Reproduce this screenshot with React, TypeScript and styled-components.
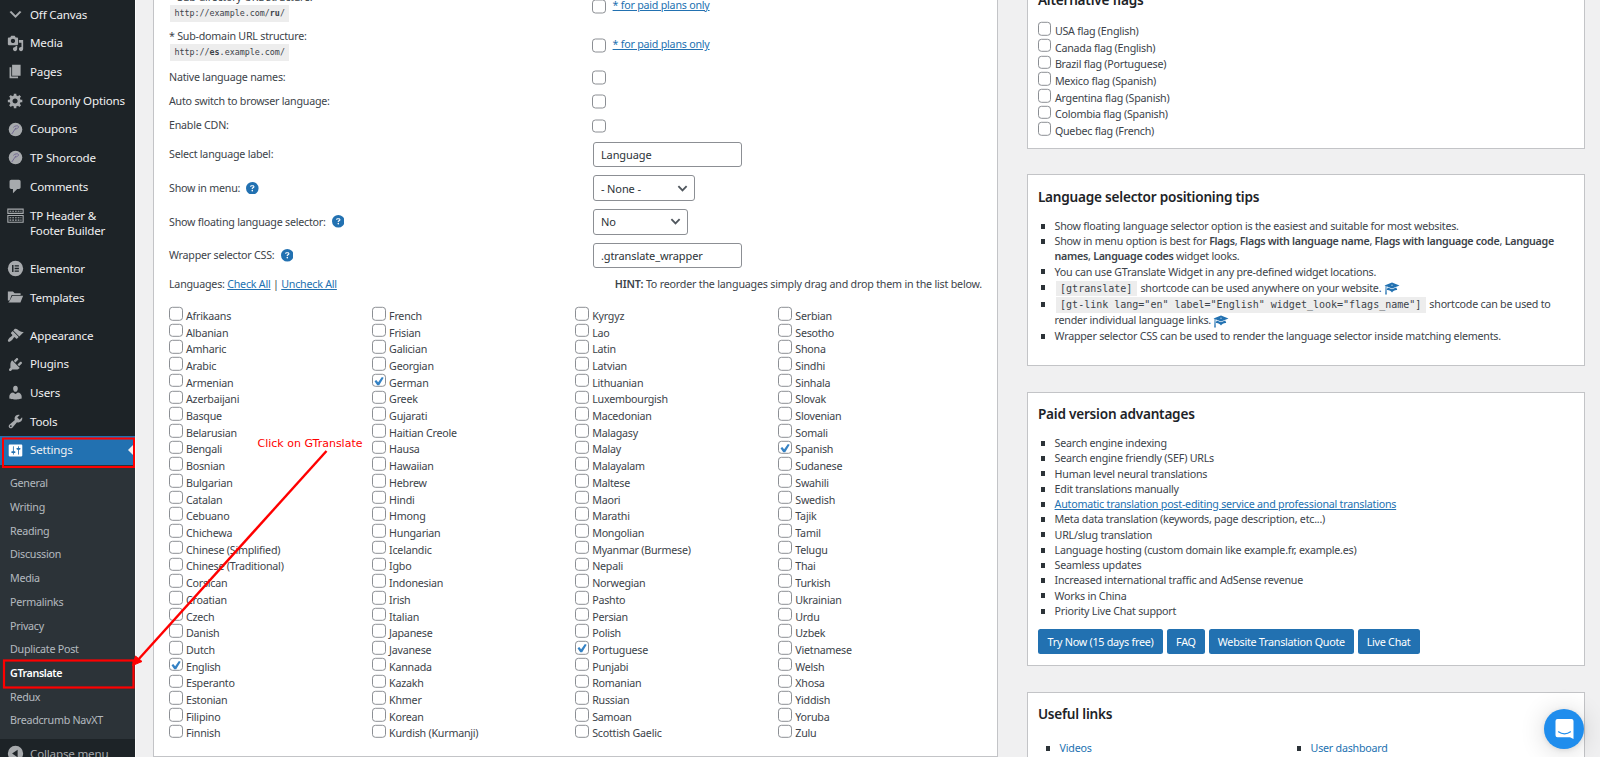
import React from "react";
import styled, { createGlobalStyle } from "styled-components";
import { FaCircleQuestion } from "react-icons/fa6";

const sans = `"Noto Sans", "Open Sans", sans-serif`;
const mono = `"DejaVu Sans Mono", "Liberation Mono", monospace`;

const Global = createGlobalStyle`
  * { box-sizing: border-box; }
  body { margin: 0; overflow: hidden; background: #f0f0f1; font-family: ${sans}; font-size: 10.7px; letter-spacing: -0.23px; color: #3c434a; }
`;

const Page = styled.div`
  position: relative;
  display: flex;
  width: 1600px;
  height: 757px;
  overflow: hidden;
`;

/* ---------- sidebar ---------- */
const Sidebar = styled.nav`
  width: 134.5px;
  flex: none;
  padding-top: 0.5px;
  background: #1d2327;
  box-shadow: 1px 0 #fafafa;
`;
const MenuItem = styled.div<{ $active?: boolean; $tall?: boolean; $gap?: boolean; $muted?: boolean }>`
  position: relative;
  display: flex;
  height: ${(p) => (p.$tall ? 44 : 28.7)}px;
  margin-top: ${(p) => (p.$gap ? 9.4 : 0)}px;
  padding: 6.2px 0 0 6.5px;
  background: ${(p) => (p.$active ? "#2271b1" : "transparent")};
  color: ${(p) => (p.$muted ? "#a7aaad" : "#f0f0f1")};
  font-size: 11.6px;
  letter-spacing: -0.18px;
  line-height: 15.2px;
  svg { flex: none; width: 17px; height: 17px; margin-top: -0.8px; margin-right: 6.5px; fill: ${(p) => (p.$active ? "#fff" : "#a7aaad")}; }
`;
const ActiveNotch = styled.i`
  position: absolute;
  right: 0;
  top: 7px;
  border: 7px solid transparent;
  border-right-color: #f0f0f1;
  border-left: 0;
`;
const Submenu = styled.div`
  background: #2c3338;
  padding: 7.2px 0 6.2px;
`;
const SubItem = styled.div<{ $current?: boolean }>`
  height: 23.74px;
  line-height: 23.74px;
  padding-left: 10px;
  font-size: 10.7px;
  letter-spacing: ${(p) => (p.$current ? "-0.38px" : "-0.25px")};
  color: ${(p) => (p.$current ? "#fff" : "rgba(240, 246, 252, 0.7)")};
  font-weight: ${(p) => (p.$current ? 600 : 400)};
`;

/* ---------- shared parts ---------- */
const Check = styled.span<{ $raise?: boolean }>`
  display: block;
  flex: none;
  width: 13.6px;
  height: 13.6px;
  border: 1px solid #8c8f94;
  border-radius: 3.4px;
  background: #fff;
  transform: translateY(${(p) => (p.$raise ? -2.2 : 0.5)}px);
  svg { display: block; width: 12px; height: 12px; fill: #3582c4; }
`;
const Link = styled.a`
  color: #2271b1;
  text-decoration: underline;
`;
const Code = styled.code<{ $small?: boolean }>`
  font-family: ${mono};
  font-size: ${(p) => (p.$small ? 8.35 : 10)}px;
  line-height: 12px;
  letter-spacing: 0;
  background: rgba(0, 0, 0, 0.07);
  padding: ${(p) => (p.$small ? "3px 4.4px 4px" : "2px 4.5px 2.5px")};
  margin: 0 1px;
`;

/* ---------- settings form ---------- */
const SettingsPanel = styled.section`
  width: 845px;
  height: 771px;
  flex: none;
  margin: -14px 0 0 18.5px;
  padding: 0 15px;
  background: #fff;
  border: 1px solid #c3c4c7;
  border-top: 0;
`;
const Row = styled.div<{ $h: number }>`
  display: flex;
  align-items: center;
  height: ${(p) => p.$h}px;
`;
const Label = styled.div`
  display: flex;
  align-items: center;
  width: 423px;
  line-height: 16px;
  svg { width: 12.6px; height: 12.6px; margin-left: 6px; color: #2271b1; }
`;
const StackLabel = styled.div`
  width: 423px;
  line-height: 15.2px;
  margin-top: -1.6px;
`;
const PlanLink = styled(Link)`
  margin: -2px 0 0 7px;
`;
const Field = styled.div<{ $w: number }>`
  display: flex;
  justify-content: space-between;
  align-items: center;
  width: ${(p) => p.$w}px;
  height: 25.5px;
  margin-left: 0.9px;
  padding: 0 6px 0 7px;
  border: 1px solid #8c8f94;
  border-radius: 3px;
  color: #2c3338;
  font-size: 11px;
  letter-spacing: -0.1px;
  svg { width: 11px; height: 11px; fill: none; stroke: #50575e; stroke-width: 2; }
`;
const LanguagesBar = styled.div`
  display: flex;
  justify-content: space-between;
  align-items: center;
  height: 24px;
  margin-bottom: 1px;
  b { font-weight: 600; }
  span + span { letter-spacing: -0.2px; }
`;
const LanguageGrid = styled.div`
  display: grid;
  grid-template-columns: repeat(4, 203.1px);
  grid-template-rows: repeat(26, 16.71px);
  grid-auto-flow: column;
  margin-top: 11.2px;
`;
const CheckLine = styled.label`
  display: flex;
  align-items: center;
  gap: 3.4px;
  height: 16.71px;
  line-height: 16px;
  white-space: nowrap;
`;

/* ---------- right column ---------- */
const Aside = styled.aside`
  display: flex;
  flex-direction: column;
  gap: 25.5px;
  width: 557.7px;
  margin: -20.5px 0 0 28.9px;
`;
const Card = styled.section<{ $h: number }>`
  height: ${(p) => p.$h}px;
  flex: none;
  padding: 0 10px;
  background: #fff;
  border: 1px solid #c3c4c7;
`;
const CardTitle = styled.h2<{ $top: number; $bottom: number }>`
  margin: ${(p) => p.$top}px 0 ${(p) => p.$bottom}px;
  font-size: 13.6px;
  line-height: 18px;
  font-weight: 600;
  letter-spacing: -0.22px;
  color: #1d2327;
`;
const Bullets = styled.ul`
  list-style: none;
  margin: 0;
  padding: 0;
`;
const Bullet = styled.li<{ $h?: number }>`
  position: relative;
  list-style: none;
  min-height: ${(p) => p.$h ?? 15.27}px;
  line-height: ${(p) => p.$h ?? 15.27}px;
  padding-left: 16.7px;
  white-space: nowrap;
  b { font-weight: 600; letter-spacing: -0.3px; }
  svg { width: 16px; height: 15px; margin: -3px 0; fill: #2271b1; vertical-align: -1.2px; }
  &::before {
    content: "";
    position: absolute;
    left: 3.5px;
    top: ${(p) => (p.$h ?? 15.27) / 2 - 2.8}px;
    width: 4px;
    height: 5px;
    background: #2c3338;
  }
`;
const Buttons = styled.div`
  display: flex;
  gap: 3.6px;
  margin-top: 9.9px;
`;
const Button = styled.button<{ $w: number }>`
  width: ${(p) => p.$w}px;
  height: 25.3px;
  padding: 0;
  border: 0;
  border-radius: 2.5px;
  background: #2271b1;
  color: #fff;
  font: 10.8px ${sans};
  letter-spacing: -0.28px;
  white-space: nowrap;
`;
const LinkColumns = styled.div`
  display: grid;
  grid-template-columns: 251px 1fr;
  padding-left: 5px;
  a { text-decoration: none; }
`;

/* ---------- overlays ---------- */
const ChatLauncher = styled.div`
  position: absolute;
  left: 1544px;
  top: 708.7px;
  width: 40px;
  height: 40px;
  border-radius: 50%;
  background: #1f8ded;
  box-shadow: 0 1px 5px rgba(0, 0, 0, 0.1), 0 2px 26px rgba(0, 0, 0, 0.16);
  svg { display: block; width: 40px; height: 40px; }
`;
const Annotation = styled.svg`
  position: absolute;
  left: 0;
  top: 0;
  pointer-events: none;
`;
const Note = styled.div`
  position: absolute;
  left: 257.5px;
  top: 437px;
  font: 11px/14px "DejaVu Sans", sans-serif;
  letter-spacing: 0;
  color: #f00;
  white-space: nowrap;
`;

const paths: Record<string, string> = {
  arrow: "M5 6l5 5 5-5 2 1-7 7-7-7z",
  media: "M13 11V4c0-.55-.45-1-1-1h-1.67L9 1H5L3.67 3H2c-.55 0-1 .45-1 1v7c0 .55.45 1 1 1h10c.55 0 1-.45 1-1zM7 4.5c1.38 0 2.5 1.12 2.5 2.5S8.38 9.5 7 9.5 4.5 8.38 4.5 7 5.62 4.5 7 4.5zM14 6h5v10.5c0 1.38-1.12 2.5-2.5 2.5S14 17.88 14 16.5s1.12-2.5 2.5-2.5c.17 0 .34.02.5.05V9h-3V6zm-4 8.05V13h2v3.5c0 1.38-1.12 2.5-2.5 2.5S7 17.88 7 16.5 8.12 14 9.5 14c.17 0 .34.02.5.05z",
  page: "M6 15V2h10v13H6zm-1 1h8v2H3V5h2v11z",
  gear: "M18 12h-2.18c-.17.7-.44 1.35-.81 1.93l1.54 1.54-2.1 2.1-1.54-1.54c-.58.36-1.23.63-1.91.79V19H8v-2.18c-.68-.16-1.33-.43-1.91-.79l-1.54 1.54-2.12-2.12 1.54-1.54c-.36-.58-.63-1.23-.79-1.91H1V9.03h2.17c.16-.7.44-1.35.8-1.94L2.43 5.55l2.1-2.1 1.54 1.54c.58-.37 1.24-.64 1.93-.81V2h3v2.18c.68.16 1.33.43 1.91.79l1.54-1.54 2.12 2.12-1.54 1.54c.36.59.64 1.24.8 1.94H18V12zm-8.5 1.5c1.66 0 3-1.34 3-3s-1.34-3-3-3-3 1.34-3 3 1.34 3 3 3z",
  comment: "M5 2h9c1.1 0 2 .9 2 2v7c0 1.1-.9 2-2 2h-2l-5 5v-5H5c-1.1 0-2-.9-2-2V4c0-1.1.9-2 2-2z",
  brush: "M14.48 11.06L7.41 3.99l1.5-1.5c.5-.56 2.3-.47 3.51.32 1.21.8 1.43 1.28 2.91 2.1 1.18.64 2.45 1.26 4.45.85zm-.71.71L6.7 4.7 4.93 6.47c-.39.39-.39 1.02 0 1.41l1.06 1.06c.39.39.39 1.03 0 1.42-.6.6-1.43 1.11-2.21 1.69-.35.26-.7.53-1.01.84C1.43 14.23.4 16.08 1.4 17.07c.99 1 2.84-.03 4.18-1.36.31-.31.58-.66.85-1.02.57-.78 1.08-1.61 1.69-2.21.39-.39 1.02-.39 1.41 0l1.06 1.06c.39.39 1.02.39 1.41 0z",
  plug: "M13.11 4.36L9.87 7.6 8 5.73l3.24-3.24c.35-.34 1.05-.2 1.56.32.52.51.66 1.21.31 1.55zm-8 1.77l.91-1.12 9.01 9.01-1.19.84c-.71.71-2.63 1.16-3.82 1.16H6.14L4.9 17.26c-.59.59-1.54.59-2.12 0-.59-.58-.59-1.53 0-2.12l1.24-1.24v-3.88c0-1.13.4-3.19 1.09-3.89zm7.26 3.97l3.24-3.24c.34-.35 1.04-.21 1.55.31.52.51.66 1.21.31 1.55l-3.24 3.25z",
  user: "M10 9.25c-2.27 0-2.73-3.44-2.73-3.44C7 4.02 7.82 2 9.97 2c2.16 0 2.98 2.02 2.71 3.81 0 0-.41 3.44-2.68 3.44zm0 2.57L12.72 10c2.39 0 4.52 2.33 4.52 4.53v2.49s-3.65 1.13-7.24 1.13c-3.65 0-7.24-1.13-7.24-1.13v-2.49c0-2.25 1.94-4.48 4.47-4.48z",
  wrench: "M16.68 9.77c-1.34 1.34-3.3 1.67-4.95.99l-5.41 6.52c-.99.99-2.59.99-3.58 0s-.99-2.59 0-3.57l6.52-5.42c-.68-1.65-.35-3.61.99-4.95 1.28-1.28 3.12-1.62 4.72-1.06l-2.89 2.89 2.82 2.82 2.86-2.87c.53 1.58.18 3.39-1.08 4.65zM3.81 16.21c.4.39 1.04.39 1.43 0 .4-.4.4-1.04 0-1.43-.39-.4-1.03-.4-1.43 0-.39.39-.39 1.03 0 1.43z",
  sliders: "M18 16V4c0-.55-.45-1-1-1H3c-.55 0-1 .45-1 1v12c0 .55.45 1 1 1h14c.55 0 1-.45 1-1zM8 11h1c.55 0 1 .45 1 1s-.45 1-1 1H8v1.5c0 .28-.22.5-.5.5s-.5-.22-.5-.5V13H6c-.55 0-1-.45-1-1s.45-1 1-1h1V5.5c0-.28.22-.5.5-.5s.5.22.5.5V11zm5-2h-1c-.55 0-1-.45-1-1s.45-1 1-1h1V5.500c0-.28.22-.5.5-.5s.5.22.5.5V7h1c.55 0 1 .45 1 1s-.45 1-1 1h-1v5.500c0 .28-.22.5-.5.5s-.5-.22-.5-.5V9z",
  learn: "M10 10L2.54 7.02 3 18H1l.48-11.41L0 6l10-4 10 4zm0-5c-.55 0-1 .22-1 .5s.45.5 1 .5 1-.22 1-.5-.45-.5-1-.5zm0 6l5.57-2.23c.71.94 1.2 2.07 1.36 3.3-.3-.04-.61-.07-.93-.07-2.55 0-4.78 1.37-6 3.41C8.78 13.37 6.55 12 4 12c-.32 0-.63.03-.93.07.16-1.23.65-2.36 1.36-3.3z",
  folder: "M1 3h6l2 2h7v2H5.5L3 13.5H1zM6.3 8H19l-3.2 8H1.5l1.2-1.3z",
  collapse: "M10 1a9 9 0 1 0 0 18a9 9 0 0 0 0-18zM12.5 5.5v9L6 10z",
};

const Icon = ({ name }: { name: string }) => {
  if (name === "coupon")
    return (
      <svg viewBox="0 0 20 20">
        <circle cx="10" cy="10" r="8" />
        <path d="M5.500 15.500L10.500 8M7.500 7.500c1.500-2 5.500-2.500 6-1s-2 3-4 3" fill="none" stroke="#6f6591" strokeWidth="1.1" />
      </svg>
    );
  if (name === "builder")
    return (
      <svg viewBox="0 0 20 20">
        <g fill="none" stroke="#a7aaad" strokeWidth="1.3">
          <path d="M1 2.500h18v5h-18zM1 10h18v8h-18z" />
          <path d="M3 5h14M3 12.700h14M3 15.500h14" strokeDasharray="2 1.200" />
        </g>
      </svg>
    );
  if (name === "elementor")
    return (
      <svg viewBox="0 0 20 20">
        <circle cx="10" cy="10" r="9" />
        <path d="M6.800 6v8M9 6.900h5M9 10h5M9 13.100h5" stroke="#1d2327" strokeWidth="1.700" />
      </svg>
    );
  return (
    <svg viewBox="0 0 20 20">
      <path d={paths[name]} fillRule={name === "collapse" ? "evenodd" : undefined} />
    </svg>
  );
};

const Checkbox = ({ on, raise }: { on?: boolean; raise?: boolean }) => (
  <Check $raise={raise}>
    {on && (
      <svg viewBox="0 0 20 20">
        <path d="M14.830 3.500l3 1.600-7.500 12.200h-3.200L2.500 10.700l2.900-2.200 3.200 4z" />
      </svg>
    )}
  </Check>
);

const Caret = () => (
  <svg viewBox="0 0 12 12">
    <path d="M1.500 3.500L6 8l4.500-4.500" />
  </svg>
);

const menu: { icon: string; text: string; second?: string; gap?: boolean }[] = [
  { icon: "arrow", text: "Off Canvas" },
  { icon: "media", text: "Media" },
  { icon: "page", text: "Pages" },
  { icon: "gear", text: "Couponly Options" },
  { icon: "coupon", text: "Coupons" },
  { icon: "coupon", text: "TP Shorcode" },
  { icon: "comment", text: "Comments" },
  { icon: "builder", text: "TP Header &", second: "Footer Builder" },
  { icon: "elementor", text: "Elementor", gap: true },
  { icon: "folder", text: "Templates" },
  { icon: "brush", text: "Appearance", gap: true },
  { icon: "plug", text: "Plugins" },
  { icon: "user", text: "Users" },
  { icon: "wrench", text: "Tools" },
];
const submenu = ["General", "Writing", "Reading", "Discussion", "Media", "Permalinks", "Privacy", "Duplicate Post", "GTranslate", "Redux", "Breadcrumb NavXT"];

const languages = (
  "Afrikaans,Albanian,Amharic,Arabic,Armenian,Azerbaijani,Basque,Belarusian,Bengali,Bosnian,Bulgarian,Catalan,Cebuano,Chichewa,Chinese (Simplified),Chinese (Traditional),Corsican,Croatian,Czech,Danish,Dutch,English,Esperanto,Estonian,Filipino,Finnish," +
  "French,Frisian,Galician,Georgian,German,Greek,Gujarati,Haitian Creole,Hausa,Hawaiian,Hebrew,Hindi,Hmong,Hungarian,Icelandic,Igbo,Indonesian,Irish,Italian,Japanese,Javanese,Kannada,Kazakh,Khmer,Korean,Kurdish (Kurmanji)," +
  "Kyrgyz,Lao,Latin,Latvian,Lithuanian,Luxembourgish,Macedonian,Malagasy,Malay,Malayalam,Maltese,Maori,Marathi,Mongolian,Myanmar (Burmese),Nepali,Norwegian,Pashto,Persian,Polish,Portuguese,Punjabi,Romanian,Russian,Samoan,Scottish Gaelic," +
  "Serbian,Sesotho,Shona,Sindhi,Sinhala,Slovak,Slovenian,Somali,Spanish,Sudanese,Swahili,Swedish,Tajik,Tamil,Telugu,Thai,Turkish,Ukrainian,Urdu,Uzbek,Vietnamese,Welsh,Xhosa,Yiddish,Yoruba,Zulu"
).split(",");
const enabled = new Set(["English", "German", "Portuguese", "Spanish"]);

const flags = ["USA flag (English)", "Canada flag (English)", "Brazil flag (Portuguese)", "Mexico flag (Spanish)", "Argentina flag (Spanish)", "Colombia flag (Spanish)", "Quebec flag (French)"];
const advantages = [
  "Search engine indexing",
  "Search engine friendly (SEF) URLs",
  "Human level neural translations",
  "Edit translations manually",
  "Automatic translation post-editing service and professional translations",
  "Meta data translation (keywords, page description, etc...)",
  "URL/slug translation",
  "Language hosting (custom domain like example.fr, example.es)",
  "Seamless updates",
  "Increased international traffic and AdSense revenue",
  "Works in China",
  "Priority Live Chat support",
];

export default function App() {
  return (
    <Page>
      <Global />
      <Sidebar>
        {menu.map((m) => (
          <MenuItem key={m.text} $tall={!!m.second} $gap={m.gap}>
            <Icon name={m.icon} />
            <span>
              {m.text}
              {m.second && <br />}
              {m.second}
            </span>
          </MenuItem>
        ))}
        <MenuItem $active>
          <Icon name="sliders" />
          <span>Settings</span>
          <ActiveNotch />
        </MenuItem>
        <Submenu>
          {submenu.map((s) => (
            <SubItem key={s} $current={s === "GTranslate"}>{s}</SubItem>
          ))}
        </Submenu>
        <MenuItem $muted>
          <Icon name="collapse" />
          <span>Collapse menu</span>
        </MenuItem>
      </Sidebar>

      <SettingsPanel>
        <Row $h={39.5}>
          <StackLabel>
            * Sub-directory URL structure:
            <br />
            <Code $small>http://example.com/<b>ru</b>/</Code>
          </StackLabel>
          <Checkbox />
          <PlanLink>* for paid plans only</PlanLink>
        </Row>
        <Row $h={39.5}>
          <StackLabel>
            * Sub-domain URL structure:
            <br />
            <Code $small>http://<b>es</b>.example.com/</Code>
          </StackLabel>
          <Checkbox />
          <PlanLink>* for paid plans only</PlanLink>
        </Row>
        {["Native language names:", "Auto switch to browser language:", "Enable CDN:"].map((t) => (
          <Row key={t} $h={24.2}>
            <Label>{t}</Label>
            <Checkbox />
          </Row>
        ))}
        <Row $h={33.7}>
          <Label>Select language label:</Label>
          <Field $w={149}>Language</Field>
        </Row>
        <Row $h={33.7}>
          <Label>Show in menu:<FaCircleQuestion /></Label>
          <Field $w={102}>- None -<Caret /></Field>
        </Row>
        <Row $h={33.7}>
          <Label>Show floating language selector:<FaCircleQuestion /></Label>
          <Field $w={95.5}>No<Caret /></Field>
        </Row>
        <Row $h={33.7}>
          <Label>Wrapper selector CSS:<FaCircleQuestion /></Label>
          <Field $w={149}>.gtranslate_wrapper</Field>
        </Row>
        <LanguagesBar>
          <span>Languages: <Link>Check All</Link> | <Link>Uncheck All</Link></span>
          <span><b>HINT:</b> To reorder the languages simply drag and drop them in the list below.</span>
        </LanguagesBar>
        <LanguageGrid>
          {languages.map((l) => (
            <CheckLine key={l}>
              <Checkbox raise on={enabled.has(l)} />
              {l}
            </CheckLine>
          ))}
        </LanguageGrid>
      </SettingsPanel>

      <Aside>
        <Card $h={169}>
          <CardTitle $top={10.5} $bottom={13.6}>Alternative flags</CardTitle>
          {flags.map((f) => (
            <CheckLine key={f}>
              <Checkbox raise />
              {f}
            </CheckLine>
          ))}
        </Card>
        <Card $h={192}>
          <CardTitle $top={13} $bottom={12.8}>Language selector positioning tips</CardTitle>
          <Bullets>
            <Bullet>Show floating language selector option is the easiest and suitable for most websites.</Bullet>
            <Bullet>
              Show in menu option is best for <b>Flags</b>, <b>Flags with language name</b>, <b>Flags with language code</b>, <b>Language</b>
              <br />
              <b>names</b>, <b>Language codes</b> widget looks.
            </Bullet>
            <Bullet>You can use GTranslate Widget in any pre-defined widget locations.</Bullet>
            <Bullet $h={16.3}><Code>[gtranslate]</Code> shortcode can be used anywhere on your website. <Icon name="learn" /></Bullet>
            <Bullet $h={16.3}>
              <Code>[gt-link lang="en" label="English" widget_look="flags_name"]</Code> shortcode can be used to
              <br />
              render individual language links. <Icon name="learn" />
            </Bullet>
            <Bullet>Wrapper selector CSS can be used to render the language selector inside matching elements.</Bullet>
          </Bullets>
        </Card>
        <Card $h={274.5}>
          <CardTitle $top={12.9} $bottom={12.6}>Paid version advantages</CardTitle>
          <Bullets>
            {advantages.map((a, i) => (
              <Bullet key={a}>{i === 4 ? <Link>{a}</Link> : a}</Bullet>
            ))}
          </Bullets>
          <Buttons>
            <Button $w={125.3}>Try Now (15 days free)</Button>
            <Button $w={38.3}>FAQ</Button>
            <Button $w={145.3}>Website Translation Quote</Button>
            <Button $w={62}>Live Chat</Button>
          </Buttons>
        </Card>
        <Card $h={110}>
          <CardTitle $top={12.5} $bottom={17.7}>Useful links</CardTitle>
          <LinkColumns>
            <Bullet as="div"><Link>Videos</Link></Bullet>
            <Bullet as="div"><Link>User dashboard</Link></Bullet>
          </LinkColumns>
        </Card>
      </Aside>

      <Annotation width="400" height="757" viewBox="0 0 400 757" fill="none" stroke="#f00">
        <rect x="3" y="438.500" width="131" height="28.500" strokeWidth="2" />
        <rect x="4" y="660.500" width="129.500" height="27" strokeWidth="2.200" />
        <path d="M326.500 451L137 661" strokeWidth="2.400" />
        <path d="M132.500 665.500L135.500 656L142 661.500Z" fill="#f00" strokeWidth="1" />
      </Annotation>
      <Note>Click on GTranslate</Note>

      <ChatLauncher>
        <svg viewBox="0 0 40 40">
          <path d="M13.500 10h14a2 2 0 0 1 2 2v18l-3.500-1.800H13.500a2 2 0 0 1-2-2V12a2 2 0 0 1 2-2z" fill="#fff" />
          <path d="M14.500 22.800c3.500 2.700 8.500 2.700 12 0" fill="none" stroke="#1f8ded" strokeWidth="1.200" strokeLinecap="round" />
        </svg>
      </ChatLauncher>
    </Page>
  );
}
